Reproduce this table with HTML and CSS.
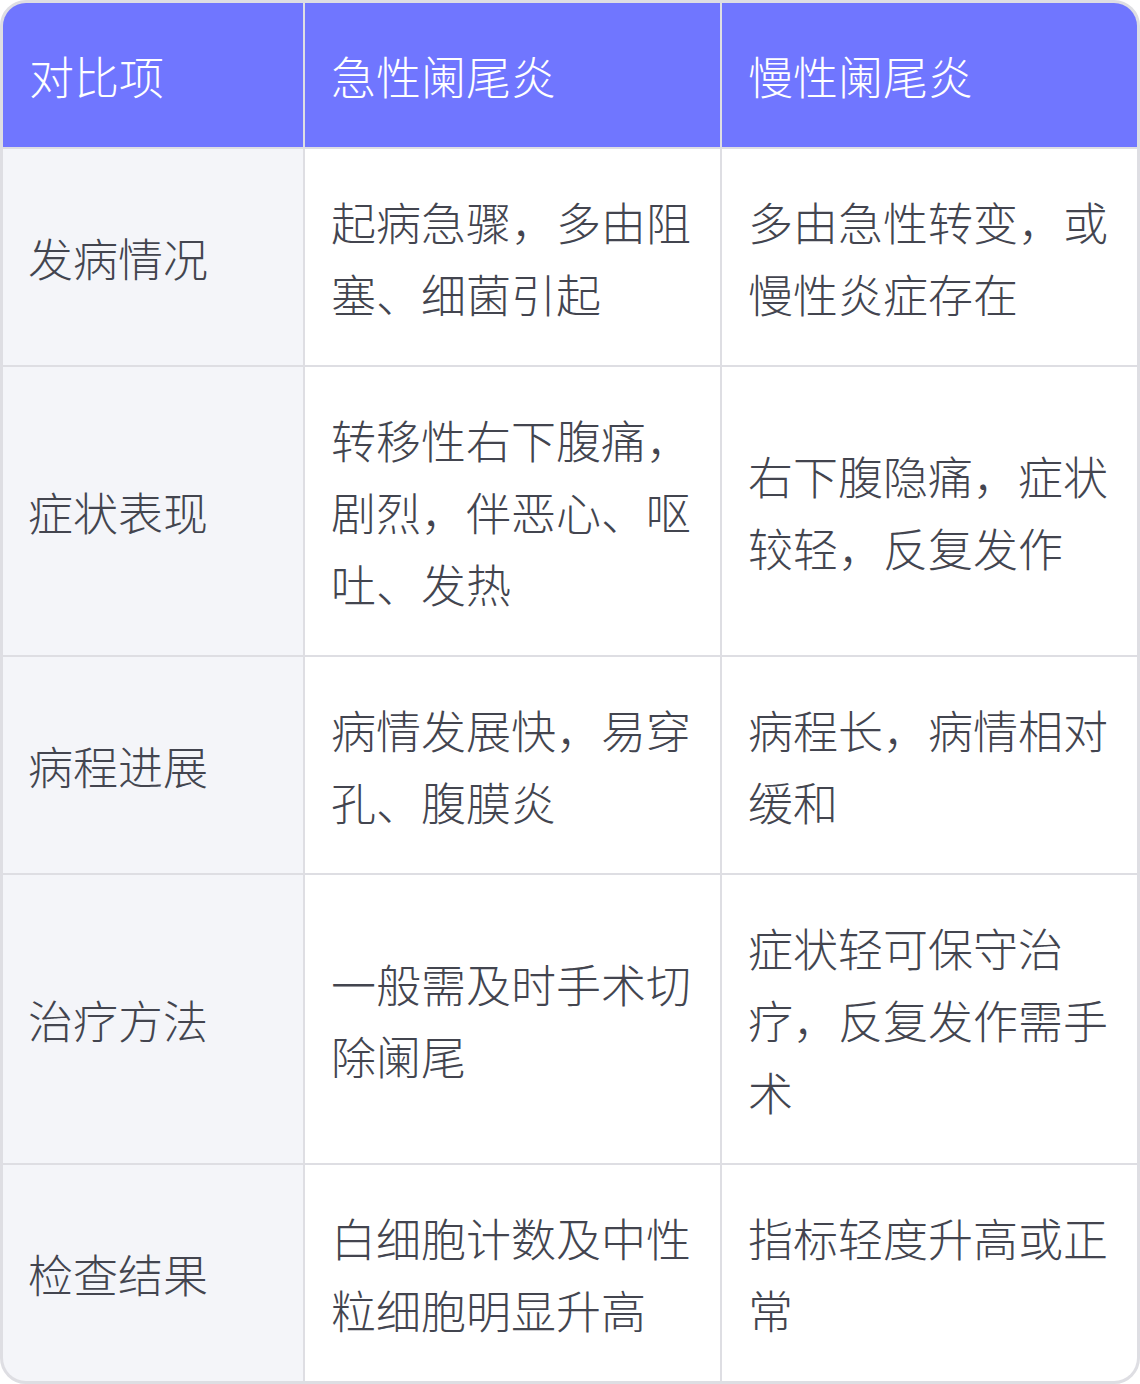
FILE: index.html
```html
<!DOCTYPE html>
<html lang="zh-CN">
<head>
<meta charset="utf-8">
<title>急性阑尾炎与慢性阑尾炎对比</title>
<link rel="stylesheet" href="styles.css">
</head>
<body>
<div class="table">
  <div class="cell head">对比项</div>
  <div class="cell head">急性阑尾炎</div>
  <div class="cell head">慢性阑尾炎</div>

  <div class="cell label">发病情况</div>
  <div class="cell">起病急骤，多由阻塞、细菌引起</div>
  <div class="cell">多由急性转变，或慢性炎症存在</div>

  <div class="cell label">症状表现</div>
  <div class="cell">转移性右下腹痛，剧烈，伴恶心、呕吐、发热</div>
  <div class="cell">右下腹隐痛，症状较轻，反复发作</div>

  <div class="cell label">病程进展</div>
  <div class="cell">病情发展快，易穿孔、腹膜炎</div>
  <div class="cell">病程长，病情相对缓和</div>

  <div class="cell label">治疗方法</div>
  <div class="cell">一般需及时手术切除阑尾</div>
  <div class="cell">症状轻可保守治疗，反复发作需手术</div>

  <div class="cell label">检查结果</div>
  <div class="cell">白细胞计数及中性粒细胞明显升高</div>
  <div class="cell">指标轻度升高或正常</div>
</div>
</body>
</html>
```
FILE: styles.css
```css
html, body {
  margin: 0;
  padding: 0;
  background: #ffffff;
}
.table {
  width: 1140px;
  height: 1384px;
  box-sizing: border-box;
  border: 3px solid #dedee3;
  border-radius: 26px;
  overflow: hidden;
  display: grid;
  grid-template-columns: 300px 415px 415px;
  grid-template-rows: 144px 216px 288px 216px 288px 216px;
  gap: 2px;
  background: #dedee3;
  font-family: "Noto Sans CJK SC", "Noto Sans", sans-serif;
  font-weight: 300;
  font-size: 45px;
  line-height: 72px;
  color: #43454f;
}
.cell {
  background: #ffffff;
  padding: 2px 18px 0 26px;
  display: flex;
  align-items: center;
  word-break: break-all;
}
.head {
  background: #7076ff;
  color: #ffffff;
}
.label {
  background: #f4f5f9;
  padding-left: 25px;
}
```
